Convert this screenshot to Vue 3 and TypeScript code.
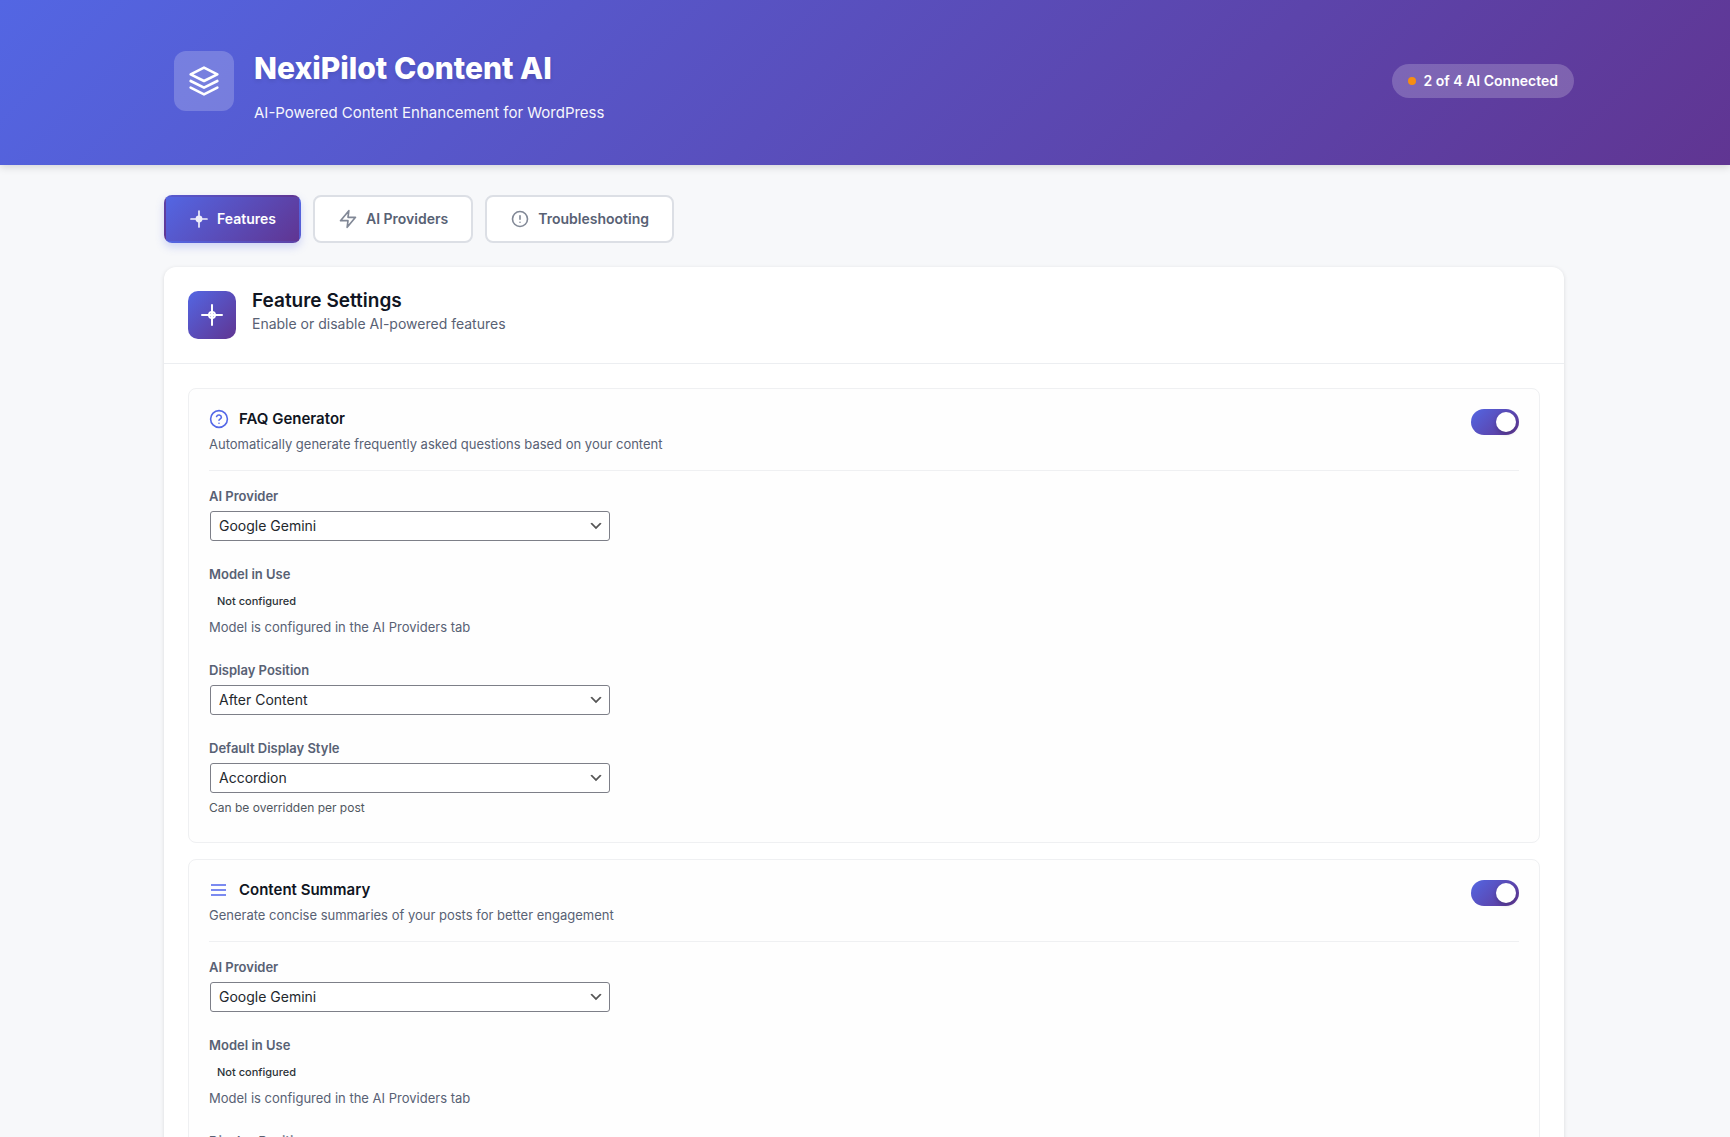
<script setup lang="ts">
import { ref } from 'vue'

interface Feature {
  id: string
  title: string
  description: string
  icon: 'help' | 'lines'
  enabled: boolean
  provider: string
  position: string
  displayStyle: string
}

const activeTab = ref('features')
const tabs = [
  { id: 'features', label: 'Features' },
  { id: 'providers', label: 'AI Providers' },
  { id: 'troubleshooting', label: 'Troubleshooting' },
]

const providers = ['Google Gemini', 'OpenAI', 'Claude', 'Grok']
const positions = ['Before Content', 'After Content']
const displayStyles = ['Accordion', 'Static']

const features = ref<Feature[]>([
  {
    id: 'faq',
    title: 'FAQ Generator',
    description: 'Automatically generate frequently asked questions based on your content',
    icon: 'help',
    enabled: true,
    provider: 'Google Gemini',
    position: 'After Content',
    displayStyle: 'Accordion',
  },
  {
    id: 'summary',
    title: 'Content Summary',
    description: 'Generate concise summaries of your posts for better engagement',
    icon: 'lines',
    enabled: true,
    provider: 'Google Gemini',
    position: 'Before Content',
    displayStyle: 'Accordion',
  },
])
</script>

<template>
  <div class="page">
    <header class="banner">
      <div class="banner-inner">
        <div class="logo">
          <svg width="32" height="32" viewBox="0 0 24 24" fill="none" stroke="currentColor" stroke-width="2" stroke-linecap="round" stroke-linejoin="round">
            <path d="M12 2 2 7l10 5 10-5-10-5Z" />
            <path d="m2 12 10 5 10-5" />
            <path d="m2 17 10 5 10-5" />
          </svg>
        </div>
        <div class="banner-text">
          <h1>NexiPilot Content AI</h1>
          <p>AI-Powered Content Enhancement for WordPress</p>
        </div>
        <div class="status"><span class="status-dot"></span>2 of 4 AI Connected</div>
      </div>
    </header>

    <main class="content">
      <nav class="tabs">
        <button
          v-for="tab in tabs"
          :key="tab.id"
          type="button"
          class="tab"
          :class="{ active: activeTab === tab.id }"
          @click="activeTab = tab.id"
        >
          <svg v-if="tab.id === 'features'" width="20" height="20" viewBox="0 0 20 20" fill="none" stroke="currentColor" stroke-width="1.7" stroke-linecap="round">
            <circle cx="10" cy="10" r="2.6" fill="currentColor" />
            <path d="M10 2v16M2 10h16" />
          </svg>
          <svg v-else-if="tab.id === 'providers'" width="20" height="20" viewBox="0 0 24 24" fill="none" stroke="currentColor" stroke-width="2" stroke-linecap="round" stroke-linejoin="round">
            <path d="M13 2 3 14h9l-1 8 10-12h-9l1-8Z" />
          </svg>
          <svg v-else width="20" height="20" viewBox="0 0 20 20" fill="none" stroke="currentColor" stroke-width="1.6" stroke-linecap="round">
            <circle cx="10" cy="10" r="7.5" />
            <path d="M10 6.7v3.6M10 13.2v.1" />
          </svg>
          {{ tab.label }}
        </button>
      </nav>

      <section class="panel">
        <div class="panel-head">
          <div class="panel-icon">
            <svg width="24" height="24" viewBox="0 0 24 24" fill="none" stroke="currentColor" stroke-width="2" stroke-linecap="round">
              <circle cx="12" cy="12" r="3" />
              <path d="M12 2v20M2 12h20" />
            </svg>
          </div>
          <div>
            <h2>Feature Settings</h2>
            <p>Enable or disable AI-powered features</p>
          </div>
        </div>

        <div class="panel-body">
          <article v-for="feature in features" :key="feature.id" class="feature">
            <div class="feature-head">
              <div>
                <h3>
                  <svg v-if="feature.icon === 'help'" width="20" height="20" viewBox="0 0 20 20" fill="none" stroke="#5468e7" stroke-width="1.6" stroke-linecap="round" stroke-linejoin="round">
                    <circle cx="10" cy="10" r="8.4" />
                    <path d="M7.6 7.5a2.5 2.5 0 0 1 4.8.8c0 1.6-2.4 1.9-2.4 3M10 14.2v.1" />
                  </svg>
                  <svg v-else width="20" height="20" viewBox="0 0 20 20" fill="none" stroke="#7b8af0" stroke-width="2">
                    <path d="M2 5h15M2 10h15M2 15h15" />
                  </svg>
                  <label :for="feature.id + '-enabled'">{{ feature.title }}</label>
                </h3>
                <p>{{ feature.description }}</p>
              </div>
              <input :id="feature.id + '-enabled'" v-model="feature.enabled" type="checkbox" class="toggle" />
            </div>

            <div class="field">
              <label :for="feature.id + '-provider'">AI Provider</label>
              <select :id="feature.id + '-provider'" v-model="feature.provider">
                <option v-for="name in providers" :key="name">{{ name }}</option>
              </select>
            </div>
            <div class="field">
              <span class="field-label">Model in Use</span>
              <span class="model">Not configured</span>
              <p class="model-note">Model is configured in the AI Providers tab</p>
            </div>
            <div class="field">
              <label :for="feature.id + '-position'">Display Position</label>
              <select :id="feature.id + '-position'" v-model="feature.position">
                <option v-for="name in positions" :key="name">{{ name }}</option>
              </select>
            </div>
            <div class="field">
              <label :for="feature.id + '-style'">Default Display Style</label>
              <select :id="feature.id + '-style'" v-model="feature.displayStyle">
                <option v-for="name in displayStyles" :key="name">{{ name }}</option>
              </select>
              <p class="help">Can be overridden per post</p>
            </div>
          </article>
        </div>
      </section>
    </main>
  </div>
</template>

<style>
body {
  margin: 0;
  background: #f7f8fa;
}
</style>

<style scoped>
.page {
  --brand: linear-gradient(135deg, #5366e3 0%, #603592 100%);
  font-family: Inter, Roboto, sans-serif;
  font-size: 13px;
  line-height: 20px;
  color: #586174;
}

h1, h2, h3, p {
  margin: 0;
}

svg {
  display: block;
  flex: none;
}

.banner {
  padding: 48px 0 40px 18px;
  background: var(--brand);
  box-shadow: 0 2px 8px rgba(0, 0, 0, 0.15);
  color: #fff;
}

.banner-inner {
  display: flex;
  align-items: center;
  gap: 20px;
  max-width: 1400px;
  margin: 0 auto;
}

.logo {
  display: grid;
  place-items: center;
  width: 60px;
  height: 60px;
  margin-bottom: 12px;
  border-radius: 12px;
  background: rgba(255, 255, 255, 0.2);
}

.banner-text {
  flex: 1;
}

h1 {
  font-size: 30px;
  font-weight: 800;
  line-height: 40px;
  text-shadow: 0 2px 4px rgba(0, 0, 0, 0.1);
}

.banner-text p {
  margin-top: 13px;
  font-size: 15px;
  line-height: 24px;
  opacity: 0.95;
}

.status {
  display: flex;
  align-items: center;
  gap: 8px;
  margin-bottom: 12px;
  padding: 7px 16px;
  border-radius: 20px;
  background: rgba(255, 255, 255, 0.2);
  font-size: 14px;
  font-weight: 600;
}

.status-dot {
  width: 8px;
  height: 8px;
  border-radius: 50%;
  background: #f68d12;
}

.content {
  max-width: 1400px;
  margin: 0 auto;
  padding: 30px 2px 40px 0;
}

.tabs {
  display: flex;
  gap: 12px;
  margin-bottom: 24px;
}

.tab {
  display: flex;
  align-items: center;
  gap: 8px;
  height: 48px;
  padding: 0 23px;
  border: 2px solid #dcdfe5;
  border-radius: 8px;
  background: #fff;
  color: #586174;
  font: 600 14px/20px Inter, Roboto, sans-serif;
  cursor: pointer;
}

.tab svg {
  opacity: 0.75;
}

.tab.active {
  border-color: transparent;
  background: var(--brand);
  box-shadow: 0 4px 8px rgba(84, 104, 231, 0.25);
  color: #fff;
}

.tab.active svg {
  opacity: 0.9;
}

.panel {
  border-radius: 12px;
  background: #fff;
  box-shadow: 0 1px 4px rgba(0, 0, 0, 0.12);
}

.panel-head {
  display: flex;
  gap: 16px;
  padding: 24px;
  border-bottom: 1px solid #eceef1;
}

.panel-icon {
  display: grid;
  place-items: center;
  width: 48px;
  height: 48px;
  border-radius: 10px;
  background: var(--brand);
  color: #fff;
}

h2 {
  color: #101522;
  font-size: 19px;
  font-weight: 600;
  line-height: 20px;
}

.panel-head p {
  margin-top: 3px;
  font-size: 14px;
}

.panel-body {
  display: flex;
  flex-direction: column;
  gap: 16px;
  padding: 24px;
}

.feature {
  padding: 20px 20px 1px;
  border: 1px solid #eff0f2;
  border-radius: 8px;
  background: #fefefe;
}

.feature-head {
  display: flex;
  align-items: flex-start;
  justify-content: space-between;
  margin-bottom: 16px;
  padding-bottom: 16px;
  border-bottom: 1px solid #eff0f2;
}

h3 {
  display: flex;
  align-items: center;
  gap: 10px;
  color: #101522;
  font-size: 15px;
  font-weight: 600;
  line-height: 20px;
}

.feature-head p {
  margin-top: 5px;
}

.toggle {
  appearance: none;
  flex: none;
  width: 48px;
  height: 26px;
  margin: 0;
  padding: 3px;
  border-radius: 13px;
  background: #cbd0d8;
  cursor: pointer;
}

.toggle::before {
  content: '';
  display: block;
  width: 20px;
  height: 20px;
  border-radius: 50%;
  background: #fff;
  box-shadow: 0 2px 4px rgba(0, 0, 0, 0.2);
}

.toggle:checked {
  background: var(--brand);
}

.toggle:checked::before {
  margin-left: auto;
}

.field {
  display: flex;
  flex-direction: column;
  align-items: flex-start;
  margin-bottom: 24px;
}

.field label,
.field-label {
  margin-bottom: 6px;
  font-weight: 600;
  line-height: 18px;
}

.field select {
  appearance: none;
  width: 100%;
  max-width: 400px;
  height: 30px;
  margin: 0 1px;
  padding: 0 24px 0 8px;
  border: 1px solid #7d7f88;
  border-radius: 3px;
  background: #fff url("data:image/svg+xml,%3Csvg xmlns='http://www.w3.org/2000/svg' width='16' height='16' viewBox='0 0 20 20'%3E%3Cpath d='M5 6l5 5 5-5 2 1-7 7-7-7 2-1z' fill='%23555'/%3E%3C/svg%3E") no-repeat right 5px center;
  color: #23282d;
  font: 400 14px/28px Inter, Roboto, sans-serif;
}

.model {
  margin-top: 4px;
  padding: 0 8px;
  color: #2c3338;
  font-size: 11px;
  font-weight: 500;
  line-height: 16px;
}

.model-note {
  margin-top: 8px;
}

.help {
  margin-top: 6px;
  color: #50575e;
  font-size: 12px;
  line-height: 18px;
}
</style>
